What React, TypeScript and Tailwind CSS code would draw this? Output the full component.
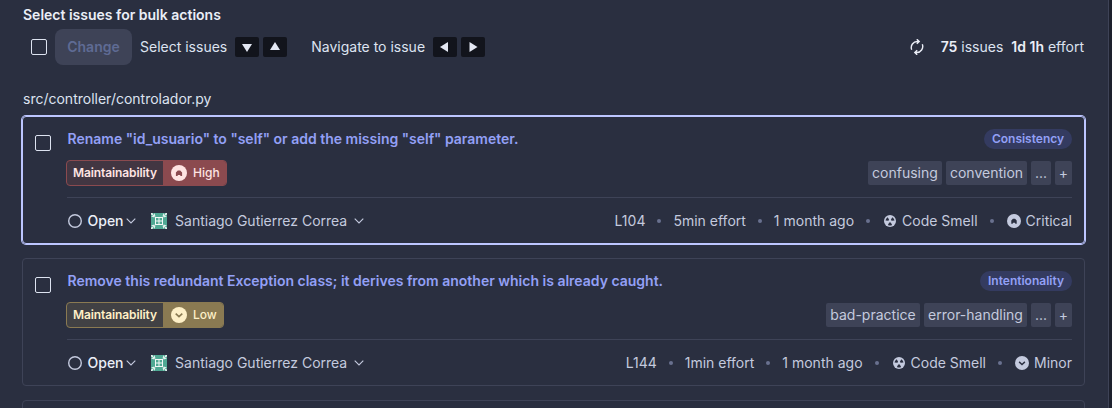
import React from "react";

function Checkbox({ className = "" }: { className?: string }) {
  return <span className={`block size-4 shrink-0 rounded-[2px] border border-[#dde3f0] ${className}`} />;
}

function Key({ d }: { d: string }) {
  return (
    <span className="flex h-5 w-6 items-center justify-center rounded-[2px] bg-[#12141c]">
      <svg width="24" height="20" viewBox="0 0 24 20" fill="#e4e8f3">
        <path d={d} />
      </svg>
    </span>
  );
}

function Chevron() {
  return (
    <svg width="10" height="6" viewBox="0 0 10 6" fill="none" stroke="#c4cade" strokeWidth="1.1">
      <path d="M.7.7 5 5 9.3.7" />
    </svg>
  );
}

function Avatar() {
  return (
    <svg width="16" height="16" viewBox="0 0 16 16">
      <rect width="16" height="16" rx="2" fill="#4fa893" />
      <path
        d="M3.500 0 4.500 3.500H3.500V4.500L0 3.500 2.500 2.500zM12.500 0l-1 3.500h1v1l3.500-1-2.500-1zM3.500 16l1-3.500h-1v-1L0 12.500l2.500 1zM12.500 16l-1-3.500h1v-1l3.500 1-2.500 1zM0 0h1.500l1.500 3-3-1.500zM16 0v1.500l-3 1.500 1.500-3zM0 16v-1.500l3-1.500-1.500 3zM16 16h-1.500l-1.500-3 3 1.500z"
        fill="#e4f1ee"
      />
      <path d="M4 4h8v8H4z" fill="#f2f8f7" />
      <path d="M5 5h2.500v2.500H5zM8.500 5H11v2.500H8.500zM5 8.500h2.500V11H5zM8.500 8.500H11V11H8.500z" fill="#4fa893" />
    </svg>
  );
}

function Severity({ level, size, fill, cut }: { level: "high" | "low"; size: number; fill: string; cut: string }) {
  return (
    <svg width={size} height={size} viewBox="0 0 16 16" className="shrink-0">
      <circle cx="8" cy="8" r="8" fill={fill} />
      {level === "high" ? (
        <path d="M4.900 11V7.400L6.800 5.500h2.400l1.900 1.900V11H9.600L9 10H7l-.6 1z" fill={cut} />
      ) : (
        <path d="M4.700 6.700 8 9.700l3.300-3" fill="none" stroke={cut} strokeWidth="1.600" />
      )}
    </svg>
  );
}

function CodeSmell() {
  return (
    <svg width="12" height="12" viewBox="0 0 12 12" className="shrink-0">
      <circle cx="6" cy="6" r="6" fill="#c4cade" />
      <path d="M1.500 5.600A4.500 4.500 0 0 1 3.700 2.200L5.100 4.700 4.400 5.800zM10.500 5.600A4.500 4.500 0 0 0 8.300 2.200L6.900 4.700l.7 1.100zM3.900 9.900 5.200 7.500h1.600l1.300 2.400a4.500 4.500 0 0 1-4.200 0z" fill="#2a2f40" />
    </svg>
  );
}

function Dot() {
  return <span className="mx-3 size-1 shrink-0 rounded-full bg-[#69718f]" />;
}

function Tag({ text, width }: { text: string; width: string }) {
  return (
    <span className={`flex h-6 items-center justify-center rounded-[2px] bg-[#3e4357] text-[#c4cade] ${width}`}>{text}</span>
  );
}

type IssueProps = {
  title: string;
  attribute: string;
  attributeWidth: string;
  level: "high" | "low";
  tags: { text: string; width: string }[];
  line: string;
  effort: string;
  severity: string;
  selected?: boolean;
};

function Issue({ title, attribute, attributeWidth, level, tags, line, effort, severity, selected }: IssueProps) {
  const high = level === "high";
  return (
    <li
      className={`flex h-32 rounded-[4px] border p-3 ${
        selected ? "border-[#bdc6ff] ring-1 ring-[#bdc6ff]" : "border-[#3e4357]"
      }`}
    >
      <Checkbox className="mt-1.5 mr-4" />
      <div className="flex min-w-0 flex-1 flex-col">
        <div className="flex h-5 items-center justify-between">
          <a className="pl-[0.5px] font-semibold text-[#93a0f6]">{title}</a>
          <span
            className={`flex h-5 items-center justify-center rounded-full bg-[#343b60] text-[12px] font-semibold text-[#93a0f6] ${attributeWidth}`}
          >
            {attribute}
          </span>
        </div>
        <div className="mt-[11px] flex h-[26px] items-center justify-between">
          <div
            className={`-ml-px flex h-[26px] overflow-hidden rounded-[4px] border text-[12px] font-semibold ${
              high ? "w-[161px] border-[#8b4a4f] bg-[#423642] text-[#fee4e2]" : "w-[158px] border-[#8a7a52] bg-[#414144] text-[#fef0c7]"
            }`}
          >
            <span className="flex w-24 items-center pl-1.5 tracking-[-0.1px]">Maintainability</span>
            <span className={`flex flex-1 items-center gap-1.5 pl-2 font-medium ${high ? "bg-[#8b4a4f]" : "bg-[#8a7a52]"}`}>
              <Severity level={level} size={16} fill={high ? "#fee4e2" : "#fef0c7"} cut={high ? "#8b4a4f" : "#8a7a52"} />
              {high ? "High" : "Low"}
            </span>
          </div>
          <div className="flex gap-1">
            {tags.map((t) => (
              <Tag key={t.text} text={t.text} width={t.width} />
            ))}
            <Tag text="..." width="w-5" />
            <Tag text="+" width="w-[17px]" />
          </div>
        </div>
        <div className="mt-[11px] h-px shrink-0 bg-[#3e4357]" />
        <div className="mt-[13px] flex h-5 shrink-0 items-center text-[#c4cade]">
          <svg width="16" height="16" viewBox="0 0 16 16" fill="none" stroke="#c4cade" strokeWidth="1.400">
            <circle cx="8" cy="8" r="6.300" />
          </svg>
          <span className="ml-[4.5px] mr-[2.500px] font-medium text-[#ebeef7]">Open</span>
          <Chevron />
          <span className="ml-[15px] mr-2">
            <Avatar />
          </span>
          <span className="mr-[7px]">Santiago Gutierrez Correa</span>
          <Chevron />
          <div className="ml-auto flex items-center">
            <span>{line}</span>
            <Dot />
            <span>{effort}</span>
            <Dot />
            <span>1 month ago</span>
            <Dot />
            <span className="ml-0.5 mr-1.5">
              <CodeSmell />
            </span>
            <span>Code Smell</span>
            <Dot />
            <span className="ml-px mr-[5px]">
              <Severity level={level} size={14} fill="#c4cade" cut="#2a2f40" />
            </span>
            <span>{severity}</span>
          </div>
        </div>
      </div>
    </li>
  );
}

export default function App() {
  return (
    <div className="flex h-[408px] w-[1112px] overflow-hidden bg-[#1d202d] font-['Inter',sans-serif] text-[14px] leading-5 text-[#dde3f0]">
      <main className="h-full w-[1109px] border-r border-[#3e4357] bg-[#2a2f40] pl-[22px] pr-[23px]">
        <h2 className="ml-[1px] mt-[5px] font-semibold text-[#ebeef7]">Select issues for bulk actions</h2>
        <div className="mt-1 flex h-9 items-center pl-[9px]">
          <Checkbox />
          <button className="ml-2 h-9 w-[77px] rounded-[8px] bg-[#3e4357] font-semibold text-[#5f6b94]">Change</button>
          <span className="ml-2 mr-2">Select issues</span>
          <div className="flex gap-1">
            <Key d="M7 7h10l-5 8z" />
            <Key d="M7 13h10l-5-8z" />
          </div>
          <span className="ml-6 mr-2">Navigate to issue</span>
          <div className="flex gap-1">
            <Key d="M15 5v10l-8-5z" />
            <Key d="M8.500 5v10l8-5z" />
          </div>
          <div className="ml-auto flex items-center">
            <svg width="16" height="16" viewBox="0 0 16 16" fill="none" stroke="#ebeef7" strokeWidth="1.400" className="mr-4">
              <path d="M2.700 10.700A6 6 0 0 1 8.600 2.500H10M7.800.2l2.400 2.300-2.400 2.300M13.300 5.300A6 6 0 0 1 7.400 13.500H6M8.200 15.800 5.800 13.500l2.400-2.300" />
            </svg>
            <span className="mr-2">
              <b className="font-semibold text-[#ebeef7]">75</b> issues
            </span>
            <span className="mr-px">
              <b className="font-semibold text-[#ebeef7]">1d 1h</b> effort
            </span>
          </div>
        </div>
        <div className="ml-[1px] mt-6">src/controller/controlador.py</div>
        <ul className="mt-[7px] flex flex-col gap-[14px]">
          <Issue
            title={'Rename "id_usuario" to "self" or add the missing "self" parameter.'}
            attribute="Consistency"
            attributeWidth="w-[88px]"
            level="high"
            tags={[
              { text: "confusing", width: "w-[74px]" },
              { text: "convention", width: "w-[81px]" },
            ]}
            line="L104"
            effort="5min effort"
            severity="Critical"
            selected
          />
          <Issue
            title="Remove this redundant Exception class; it derives from another which is already caught."
            attribute="Intentionality"
            attributeWidth="w-[92px]"
            level="low"
            tags={[
              { text: "bad-practice", width: "w-[94px]" },
              { text: "error-handling", width: "w-[103px]" },
            ]}
            line="L144"
            effort="1min effort"
            severity="Minor"
          />
          <li className="h-32 rounded-[4px] border border-[#3e4357]" />
        </ul>
      </main>
    </div>
  );
}
